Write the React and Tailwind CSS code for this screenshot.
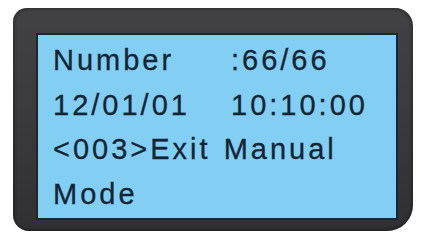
export default function App() {
  const font = { fontFamily: '"Liberation Sans", Arial, sans-serif' };
  return (
    <div className="w-[426px] h-[239px] bg-white pt-[8px] pl-[13px]">
      <div className="w-[400px] h-[223px] rounded-tl-[14px] rounded-tr-[18px] rounded-bl-[16px] rounded-br-[26px] bg-gradient-to-b from-[#424245] via-[#3a3a3d] to-[#303032] shadow-[inset_0_0_4px_rgba(0,0,0,0.6)] pt-[25px] pl-[23px] pr-[15px] pb-[11px]">
        <div className="w-[362px] h-[187px] bg-[#82cff3] border-2 border-[#1b2633] pl-[15px] pt-[3px] text-[#132435] text-[29px] leading-[44.5px] tracking-[3px] [-webkit-text-stroke:0.3px_#132435]" style={font}>
          <div className="flex">
            <span className="w-[178px]">Number</span>
            <span>:66/66</span>
          </div>
          <div className="flex">
            <span className="w-[178px]">12/01/01</span>
            <span>10:10:00</span>
          </div>
          <div className="whitespace-nowrap [word-spacing:2px]">&lt;003&gt;Exit Manual</div>
          <div>Mode</div>
        </div>
      </div>
    </div>
  );
}
